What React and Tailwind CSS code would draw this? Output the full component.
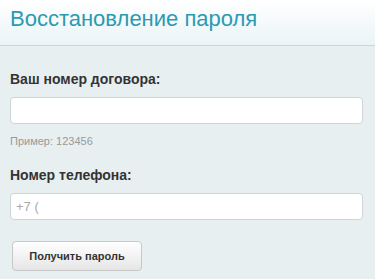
export default function App() {
  return (
    <div className="w-[375px] h-[279px] overflow-hidden bg-[#e8eff1] font-['Liberation_Sans',Arial,sans-serif]">
      <div className="h-[46px] border-b border-[#c9d6da] bg-gradient-to-b from-[#ffffff] to-[#eaf4f6] px-[10px] pt-[4px]">
        <h1 className="text-[22px] leading-[30px] text-[#2b9ab3]">Восстановление пароля</h1>
      </div>
      <div className="px-[10px] pt-[25px]">
        <label className="block text-[14px] leading-[16px] font-bold text-[#333]">Ваш номер договора:</label>
        <input
          type="text"
          className="mt-[10px] block w-[353px] h-[27px] rounded-[4px] border border-[#cfd4d6] bg-white px-[5px] text-[13px] outline-none"
        />
        <div className="mt-[11px] text-[11px] leading-[13px] text-[#999]">Пример: 123456</div>
        <label className="mt-[19px] block text-[14px] leading-[16px] font-bold text-[#333]">Номер телефона:</label>
        <input
          type="text"
          placeholder="+7 ("
          className="mt-[10px] block w-[353px] h-[27px] rounded-[4px] border border-[#cfd4d6] bg-white px-[5px] text-[13px] text-[#333] placeholder:text-[#aaa] outline-none"
        />
        <button className="mt-[21px] ml-[2px] block w-[130px] h-[30px] rounded-[4px] border border-[#c8c8c8] bg-gradient-to-b from-[#ffffff] to-[#e6e6e6] text-[11px] font-bold text-[#333]">
          Получить пароль
        </button>
      </div>
    </div>
  )
}
